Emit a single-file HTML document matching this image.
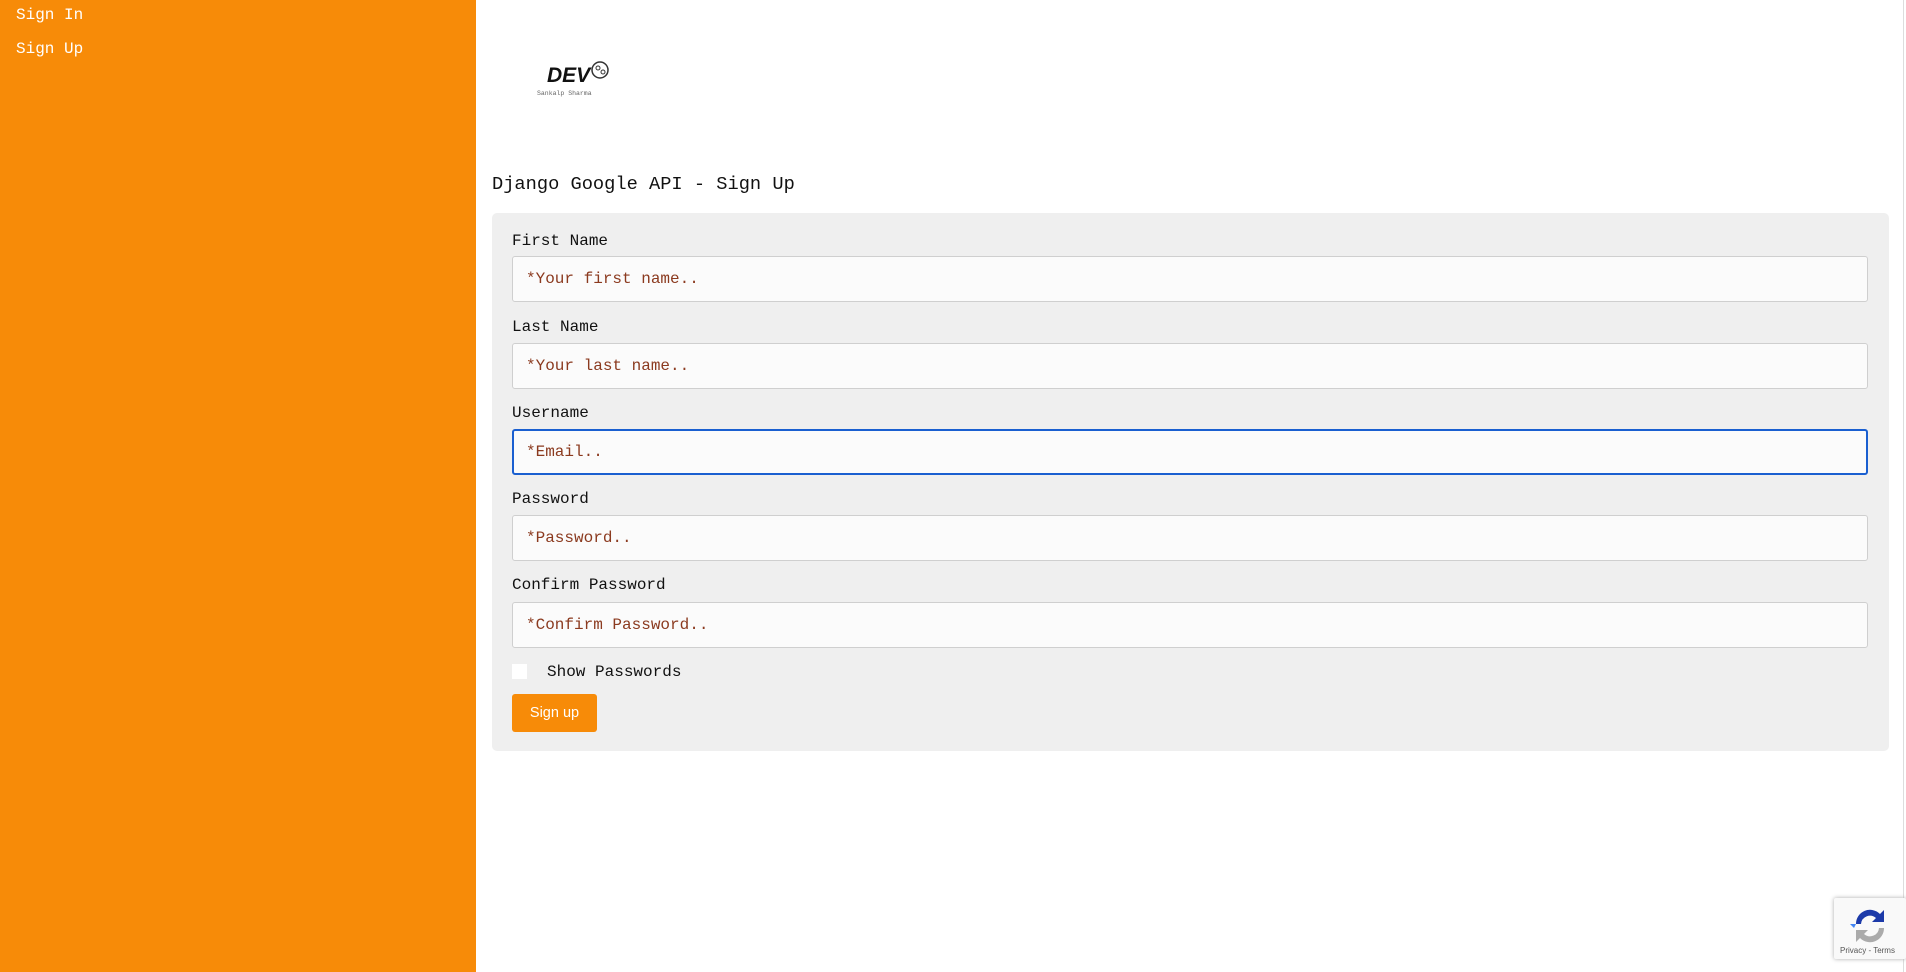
<!DOCTYPE html>
<html><head><meta charset="utf-8"><style>
*{box-sizing:border-box;margin:0;padding:0}
body{width:1906px;height:972px;overflow:hidden;background:#fff;font-family:"Liberation Mono",monospace;position:relative}
.side{position:absolute;left:0;top:0;width:476px;height:972px;background:#f78b08}
.side a{position:absolute;left:16px;font-size:16px;color:#fff;text-decoration:none}
.scroll{position:absolute;right:2px;top:0;width:1px;height:972px;background:#ddd}
.logo{position:absolute;left:535px;top:58px}
h1{position:absolute;left:492px;top:173px;font-size:18.7px;font-weight:normal;color:#111}
.panel{position:absolute;left:492px;top:213px;width:1397px;height:538px;background:#efefef;border-radius:5px}
label{position:absolute;left:20px;font-size:16px;color:#111}
.in{position:absolute;left:20px;width:1356px;height:46px;background:#fbfbfb;border:1px solid #cfcfcf;border-radius:3px;font-size:16px;color:#8b3a1f;padding:13px 13px}
.in.f{border:2px solid #1a5fd0;padding:12px 12px}
.cb{position:absolute;left:20px;top:451px;width:15px;height:15px;background:#fff}
.btn{position:absolute;left:20px;top:481px;width:85px;height:38px;background:#f78b08;border-radius:3px;color:#fff;font-family:"Liberation Sans",sans-serif;font-size:14.5px;text-align:center;line-height:38px}
.rc{position:absolute;left:1834px;top:898px;width:72px;height:61px;background:#f9f9f9;box-shadow:0 0 4px #aaa;border-radius:2px}
</style></head><body>
<div class="side"><a style="top:6px">Sign In</a><a style="top:40px">Sign Up</a></div>
<div class="scroll"></div>
<div class="logo"><svg width="90" height="45"><text x="12" y="24" font-family="Liberation Sans" font-weight="bold" font-style="italic" font-size="21" fill="#111">DEV</text><circle cx="65" cy="12" r="8" fill="none" stroke="#333" stroke-width="1.5"/><circle cx="63" cy="10" r="2" fill="none" stroke="#333"/><circle cx="68" cy="14" r="2" fill="none" stroke="#333"/><text x="2" y="37" font-family="Liberation Mono" font-size="6.5" fill="#666">Sankalp Sharma</text></svg></div>
<h1>Django Google API - Sign Up</h1>
<div class="panel">
<label style="top:19px">First Name</label><div class="in" style="top:43px">*Your first name..</div>
<label style="top:105px">Last Name</label><div class="in" style="top:130px">*Your last name..</div>
<label style="top:191px">Username</label><div class="in f" style="top:216px">*Email..</div>
<label style="top:277px">Password</label><div class="in" style="top:302px">*Password..</div>
<label style="top:363px">Confirm Password</label><div class="in" style="top:389px">*Confirm Password..</div>
<div class="cb"></div><label style="left:55px;top:450px">Show Passwords</label>
<div class="btn">Sign up</div>
</div>
<div class="rc"><svg width="72" height="61"><path d="M22 26a14 14 0 0 1 24-10l4-4v12H38l4-4a9 9 0 0 0-15 6z" fill="#1c3aa9"/><path d="M22 26h-6l4 4" fill="#4285f4"/><path d="M50 30a14 14 0 0 1-24 10l-4 4V32h12l-4 4a9 9 0 0 0 15-6z" fill="#ababab"/><text x="6" y="55" font-family="Liberation Sans" font-size="8" fill="#555">Privacy - Terms</text></svg></div>
</body></html>
